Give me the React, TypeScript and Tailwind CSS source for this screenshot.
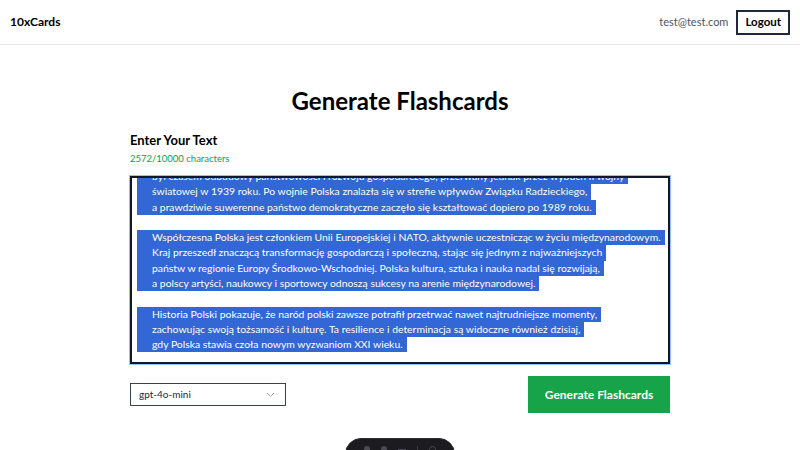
import React, { useState } from 'react';

const paragraphs: string[][] = [
  [
    'był czasem odbudowy państwowości i rozwoju gospodarczego, przerwany jednak przez wybuch II wojny',
    'światowej w 1939 roku. Po wojnie Polska znalazła się w strefie wpływów Związku Radzieckiego,',
    'a prawdziwie suwerenne państwo demokratyczne zaczęło się kształtować dopiero po 1989 roku.',
  ],
  [
    'Współczesna Polska jest członkiem Unii Europejskiej i NATO, aktywnie uczestnicząc w życiu międzynarodowym.',
    'Kraj przeszedł znaczącą transformację gospodarczą i społeczną, stając się jednym z najważniejszych',
    'państw w regionie Europy Środkowo-Wschodniej. Polska kultura, sztuka i nauka nadal się rozwijają,',
    'a polscy artyści, naukowcy i sportowcy odnoszą sukcesy na arenie międzynarodowej.',
  ],
  [
    'Historia Polski pokazuje, że naród polski zawsze potrafił przetrwać nawet najtrudniejsze momenty,',
    'zachowując swoją tożsamość i kulturę. Ta resilience i determinacja są widoczne również dzisiaj,',
    'gdy Polska stawia czoła nowym wyzwaniom XXI wieku.',
  ],
];

const Header: React.FC = () => (
  <header className="h-[45px] border-b border-gray-200 flex items-center justify-between pl-[10px] pr-[10px]">
    <span className="text-[12px] font-bold text-black">10xCards</span>
    <div className="flex items-center gap-2">
      <span className="text-[11px] text-gray-600">test@test.com</span>
      <button className="h-[25px] px-[7px] border-2 border-gray-800 text-[11.5px] font-bold text-black">
        Logout
      </button>
    </div>
  </header>
);

// selected text inside the scrolled textarea
const SelectedText: React.FC = () => (
  <div className="h-full overflow-hidden">
    <div className="mt-[-9px] text-[10.4px] leading-[15.3px] text-white">
      {paragraphs.map((lines, p) => (
        <div key={p}>
          {p > 0 && <div className="h-[15.3px]" />}
          {lines.map((line, i) => (
            <div key={i} className="h-[15.3px]">
              <span className="inline-block h-[15.3px] align-top bg-[#3367d6] pl-[15px] pr-[4px] whitespace-pre">
                {line}
              </span>
            </div>
          ))}
        </div>
      ))}
    </div>
  </div>
);

export default function App() {
  const [model] = useState('gpt-4o-mini');

  return (
    <div className="min-h-screen bg-white font-['Lato',sans-serif] text-black">
      <Header />

      <main className="w-[540px] mx-auto pt-[42px]">
        <h1 className="text-center text-[24px] font-bold leading-[28px]">Generate Flashcards</h1>

        <div className="mt-[16px]">
          <h2 className="text-[13px] font-bold leading-[18px]">Enter Your Text</h2>
          <p className="mt-[3px] text-[9.5px] text-green-600 leading-[14px]">2572/10000 characters</p>

          <div className="mt-[10px] h-[188px] border-2 border-gray-900 ring-1 ring-blue-300 pl-[5px] pb-[10px]">
            <SelectedText />
          </div>
        </div>

        <div className="mt-[12px] flex items-center justify-between">
          <div className="w-[156px] h-[23px] border border-gray-700 flex items-center justify-between pl-[8px] pr-[10px]">
            <span className="text-[10px] text-gray-800">{model}</span>
            <svg width="9" height="6" viewBox="0 0 9 6" fill="none">
              <path d="M1 1l3.5 3.5L8 1" stroke="#9ca3af" strokeWidth="1" />
            </svg>
          </div>
          <button className="w-[142px] h-[37px] bg-[#16a34a] text-white text-[12px] font-bold">
            Generate Flashcards
          </button>
        </div>
      </main>

      {/* dev toolbar */}
      <div className="fixed left-[345px] top-[438px] w-[110px] h-[40px] rounded-[16px] bg-[#1c1c20] border border-[#2d2d33] flex items-start justify-around px-[12px] pt-[7px]">
        <span className="w-[6px] h-[6px] rounded-full bg-[#4a4a52]" />
        <span className="w-[6px] h-[6px] rounded-full bg-[#4a4a52]" />
        <span className="w-[8px] h-[2px] mt-[3px] bg-[#4a4a52]" />
        <span className="w-[1px] h-[12px] bg-[#3a3a40]" />
        <span className="w-[7px] h-[7px] rounded-full border border-[#4a4a52]" />
      </div>
    </div>
  );
}
